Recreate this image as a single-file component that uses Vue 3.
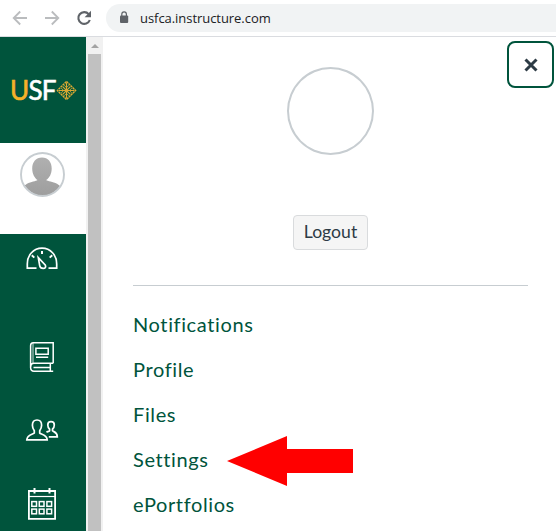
<script setup>
const links = ['Notifications', 'Profile', 'Files', 'Settings', 'ePortfolios']
const cells = [[31.8, 31.6], [39.3, 31.6], [46.9, 31.6], [31.8, 39.1], [39.3, 39.1], [46.9, 39.1]]
</script>

<template>
  <div class="window">
    <header class="toolbar">
      <svg class="controls" viewBox="0 0 106 36" width="106" height="36" fill="none">
        <g stroke="#babcbe" stroke-width="1.8">
          <path d="M27 18H14M20.2 11.5L13.7 18L20.2 24.5" />
          <path d="M45 18H58M51.8 11.5L58.3 18L51.8 24.5" />
        </g>
        <path d="M88.7 14.1A5.9 5.9 0 1 0 89.8 20" stroke="#5f6368" stroke-width="2.1" />
        <path d="M91 10.8V17.2H84.6Z" fill="#5f6368" />
      </svg>
      <div class="address">
        <svg class="lock" viewBox="0 0 10 13" width="10" height="13">
          <rect x="1" y="4.4" width="8.2" height="7.6" rx="1" fill="#5f6368" />
          <path d="M2.8 5V3.200a2.3 2.3 0 0 1 4.6 0v2" fill="none" stroke="#5f6368" stroke-width="1.2" />
        </svg>
        <span class="url">usfca.instructure.com</span>
      </div>
    </header>

    <div class="body">
      <nav class="sidebar">
        <div class="brand">
          <span class="word"><b>U</b>SF</span>
          <svg class="emblem" viewBox="0 0 22 22" width="21" height="21" fill="none" stroke="#dba932">
            <path d="M11 1.5L20.5 11L11 20.5L1.5 11Z" stroke-width="1.5" stroke-dasharray="2.4 .6" />
            <path d="M11 3V19M3 11H19M7 7L15 15M15 7L7 15" stroke-width="1.2" />
            <path d="M8.5 5.5L11 8L13.5 5.5M8.5 16.5L11 14L13.5 16.5M5.5 8.5L8 11L5.5 13.5M16.5 8.5L14 11L16.5 13.5" stroke-width=".9" />
          </svg>
        </div>
        <div class="account">
          <svg viewBox="0 0 46 46" width="46" height="46">
            <defs>
              <clipPath id="avatar"><circle cx="23.5" cy="23.5" r="21" /></clipPath>
              <linearGradient id="shade" x2="0" y2="1">
                <stop stop-color="#b0b0b0" /><stop offset="1" stop-color="#9d9d9d" />
              </linearGradient>
            </defs>
            <g clip-path="url(#avatar)" fill="url(#shade)">
              <path d="M23 6.500C17 6.500 13.200 11 13.200 17.500C13.200 22.500 15.500 27 18.500 29C17 30.300 12 30.600 8 32.800C5 34.500 3.500 37 2 40V46H45V40C43 37 41 34.500 38 32.800C34 30.600 28.500 30.300 27.200 29C30.500 27 32.700 22.500 32.700 17.500C32.700 11 29 6.500 23 6.500Z" />
            </g>
            <circle cx="23.5" cy="23.5" r="21.500" fill="none" stroke="#c7cdd1" stroke-width="1.900" />
          </svg>
        </div>
        <svg class="dashboard" viewBox="0 0 86 90" width="86" height="90" fill="none" stroke="#fff" stroke-width="1.700">
          <path d="M36.500 34.100H27.300V30C27.300 21 33.500 14.200 42 14.200S56.700 21 56.700 30V34.100H48.500" />
          <path d="M42 17V20M31.800 21.200L34.300 23.600M52.200 21.200L49.700 23.600" stroke-width="2" />
          <path d="M38.300 23.700L45.200 30.900C46.300 33 45.200 34.400 43.200 34.400C40.800 34.400 40 33.500 39.700 31.600Z" />
        </svg>
        <svg class="courses" viewBox="0 0 86 76" width="86" height="76" fill="none" stroke="#fff" stroke-width="1.500">
          <path d="M53.200 39.200V18.700H33.200C31.500 18.700 30.600 20 30.600 21.700V43.500C30.600 46 31.800 47.200 34 47.200H53.200M53.200 39.300H34C31.700 39.300 30.700 41 30.700 43M33.500 43.500H50.500M50.300 39.500V47" />
          <path d="M33 19V39" stroke-width=".8" />
          <path d="M35.900 24.300H48.200V30.200H35.900ZM36 33.200H48.200" />
        </svg>
        <svg class="groups" viewBox="0 0 86 70" width="86" height="70" fill="none" stroke="#fff" stroke-width="1.700">
          <path d="M37 20C33.900 20 32.400 22.300 32.400 25.300C32.400 28 33.500 29.500 34.300 30.700V33C33.500 34.200 27 34.500 26.800 39.900H47.200C47 34.500 40.300 34.200 39.700 33V30.700C40.500 29.500 41.600 28 41.600 25.300C41.600 22.300 40.100 20 37 20Z" />
          <path d="M46.500 32.200C47.500 31.600 49 31.600 49.600 30.700V29.200C48.400 28 47.800 26.900 47.800 25C47.800 23 49 21.700 51 21.700S54.300 23 54.300 25C54.300 26.900 53.700 28 52.500 29.200V30.700C53.500 32 57.300 31.900 57.300 36.800H48.800" />
        </svg>
        <svg class="calendar" viewBox="0 0 86 61" width="86" height="61" fill="none" stroke="#fff">
          <path d="M28.900 21H55.100V48.900H28.900Z" stroke-width="1.800" />
          <path d="M29 26.500H55" stroke-width="1.200" />
          <path d="M34.500 18V23.500M49.500 18V23.500" stroke-width="2" />
          <rect v-for="(c, i) in cells" :key="i" :x="c[0]" :y="c[1]" width="4.700" height="4.700" stroke-width="1.500" />
        </svg>
      </nav>

      <div class="scrollbar"><i class="up"></i><i class="thumb"></i></div>

      <main class="tray">
        <button class="close" aria-label="Close">
          <svg viewBox="0 0 14 14" width="14" height="14"><path d="M1.500 1.500L12.500 12.500M12.500 1.500L1.500 12.500" stroke="#2d3b45" stroke-width="3" /></svg>
        </button>
        <div class="profile">
          <div class="picture"></div>
          <button class="logout">Logout</button>
        </div>
        <ul class="links">
          <li v-for="link in links" :key="link">
            <a>{{ link }}</a>
            <svg v-if="link === 'Settings'" class="arrow" viewBox="0 0 126 50" width="126" height="50">
              <path d="M0 25L60 0V13H126V37H60V50Z" fill="#f00" />
            </svg>
          </li>
        </ul>
      </main>
    </div>
  </div>
</template>

<style>
body { margin: 0; background: #fff; overflow: hidden; }
</style>

<style scoped>
.window { width: 556px; height: 531px; overflow: hidden; background: #fff; }
.toolbar { box-sizing: border-box; height: 37px; display: flex; border-bottom: 1px solid #dadce0; }
.controls { flex: none; }
.address { flex: 1; height: 28px; margin-top: 4px; border-radius: 14px 0 0 14px; background: #f1f3f4; display: flex; align-items: center; }
.lock { margin: 0 11px 1px 13px; flex: none; }
.url { font: 13px/28px "Open Sans", "Noto Sans", sans-serif; letter-spacing: -0.05px; color: #202124; }
.body { display: flex; height: 494px; }
.sidebar { width: 86px; flex: none; background: #00543c; display: flex; flex-direction: column; }
.sidebar > svg { display: block; flex: none; }
.brand { height: 106px; flex: none; display: flex; align-items: center; box-sizing: border-box; padding-left: 10px; }
.word { width: 46px; flex: none; font: 400 26px/30px Lato, sans-serif; letter-spacing: -0.7px; color: #fff; -webkit-text-stroke: 0.6px currentColor; white-space: nowrap; }
.word b { color: #f4b229; font-weight: 400; }
.emblem { flex: none; }
.account { height: 91px; flex: none; background: #fff; box-sizing: border-box; padding: 8px 0 0 19px; }
.scrollbar { width: 17px; flex: none; background: #f1f1f1; display: flex; flex-direction: column; align-items: center; }
.up { margin: 7px 0 6px; border: 4px solid transparent; border-top: 0; border-bottom-color: #a3a3a3; }
.thumb { width: 13px; flex: 1; background: #c1c1c1; }
.tray { position: relative; flex: 1; padding: 30px 28px 0 30px; }
.close { position: absolute; top: 4px; right: 2px; width: 47px; height: 47px; box-sizing: border-box; padding: 0 0 0 1px; border: 2px solid #00543c; border-radius: 8px; background: #fff; display: flex; align-items: center; justify-content: center; }
.profile { height: 218px; display: flex; flex-direction: column; align-items: center; border-bottom: 1px solid #c7cdd1; }
.picture { width: 83px; height: 84px; border: 2px solid #c7cdd1; border-radius: 50%; }
.logout { margin-top: 60px; width: 75px; height: 35px; box-sizing: border-box; padding: 0 0 2px; border: 1px solid #d9dbdd; border-radius: 4px; background: #f5f5f5; color: #2d3b45; font: 17.6px/31px Lato, sans-serif; }
.links { list-style: none; margin: 16px 0 0; padding: 0; }
.links li { height: 45px; display: flex; align-items: center; }
.links a { color: #00543c; font: 20px/45px Lato, sans-serif; letter-spacing: 0.62px; }
.arrow { margin: 2px 0 0 18px; flex: none; }
</style>
